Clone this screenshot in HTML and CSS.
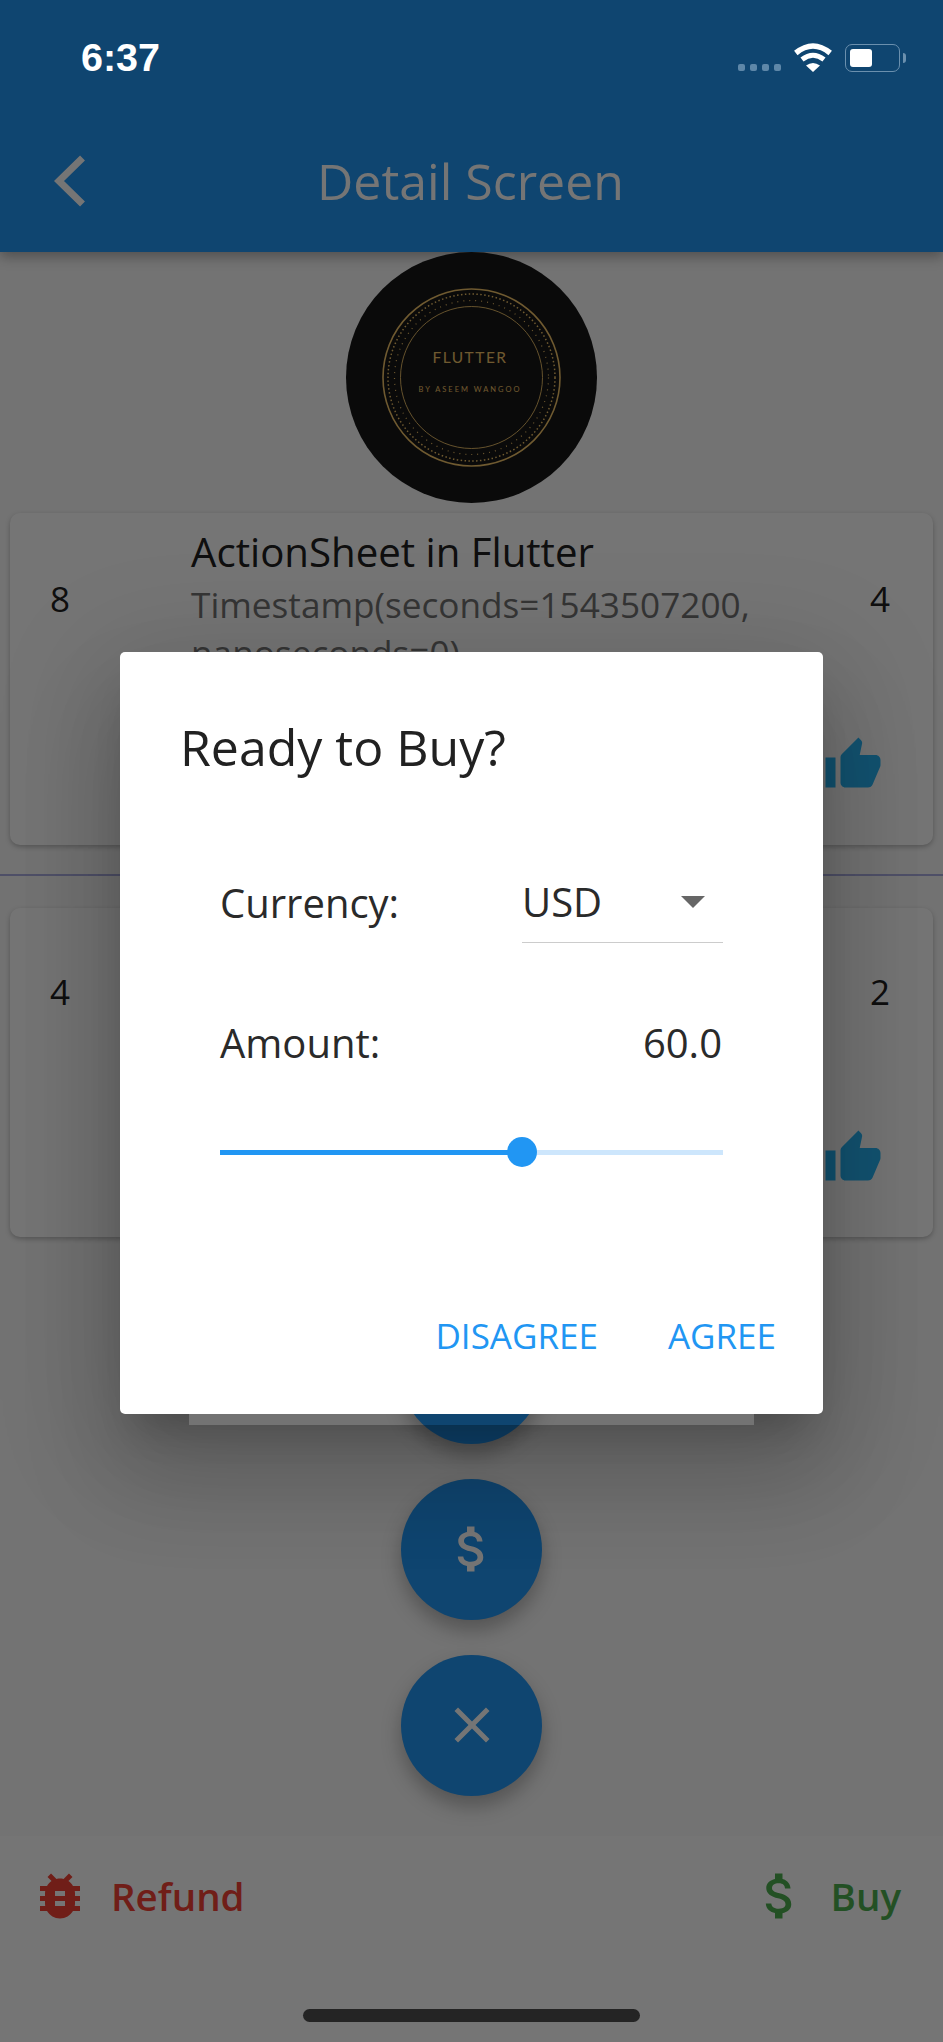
FILE: index.html
```html
<!doctype html>
<html lang="en">
<head>
    <meta charset="UTF-8">
    <meta name="viewport" content="width=device-width, initial-scale=1.0">
    <title>Detail Screen</title>
    <link rel="stylesheet" href="styles.css">
</head>
<body>
<div class="screen">

    <!-- App bar -->
    <header class="app-bar">
        <svg class="back-icon" viewBox="0 0 34 52"><polyline points="28.5,3 5,26 28.5,49"/></svg>
        <h1 class="app-title">Detail Screen</h1>
    </header>

    <main class="content">
        <!-- Avatar -->
        <svg class="logo" viewBox="0 0 251 251">
            <circle cx="125.5" cy="125.5" r="125.5" fill="#161616"/>
            <circle class="ring" cx="125.5" cy="125.5" r="88.5" stroke-width="1.6"/>
            <circle class="ring" cx="125.5" cy="125.5" r="83.5" stroke-width="1.5" stroke-dasharray="1.5 2.4"/>
            <circle class="ring" cx="125.5" cy="125.5" r="77" stroke-width="1.2" stroke-dasharray="1 5"/>
            <circle class="ring" cx="125.5" cy="125.5" r="71" stroke-width="0.9"/>
            <text class="logo-title" x="124" y="111" text-anchor="middle">FLUTTER</text>
            <text class="logo-sub" x="124" y="140" text-anchor="middle">BY ASEEM WANGOO</text>
        </svg>

        <!-- First item -->
        <article class="card card-first">
            <span class="count">8</span>
            <div class="card-text">
                <div class="card-title">ActionSheet in Flutter</div>
                <div class="card-sub">Timestamp(seconds=1543507200, nanoseconds=0)</div>
            </div>
            <div class="card-side">
                <span class="count">4</span>
                <svg class="thumb" viewBox="0 0 24 24"><path d="M1 21h4V9H1v12zm22-11c0-1.1-.9-2-2-2h-6.31l.95-4.57.03-.32c0-.41-.17-.79-.44-1.06L14.17 1 7.59 7.59C7.22 7.95 7 8.45 7 9v10c0 1.1.9 2 2 2h9c.83 0 1.54-.5 1.84-1.22l3.02-7.05c.09-.23.14-.47.14-.73v-2z"/></svg>
            </div>
        </article>

        <hr class="divider">

        <!-- Second item, its text is behind the dialog -->
        <article class="card card-second">
            <span class="count">4</span>
            <div class="card-text"></div>
            <div class="card-side">
                <span class="count">2</span>
                <svg class="thumb" viewBox="0 0 24 24"><path d="M1 21h4V9H1v12zm22-11c0-1.1-.9-2-2-2h-6.31l.95-4.57.03-.32c0-.41-.17-.79-.44-1.06L14.17 1 7.59 7.59C7.22 7.95 7 8.45 7 9v10c0 1.1.9 2 2 2h9c.83 0 1.54-.5 1.84-1.22l3.02-7.05c.09-.23.14-.47.14-.73v-2z"/></svg>
            </div>
        </article>

        <!-- Floating buttons -->
        <div class="fab-stack">
            <div class="fab"></div>
            <div class="fab">
                <svg class="fab-icon" viewBox="0 0 24 24"><path d="M11.8 10.9c-2.27-.59-3-1.2-3-2.15 0-1.09 1.01-1.85 2.7-1.85 1.78 0 2.44.85 2.5 2.1h2.21c-.07-1.72-1.12-3.3-3.21-3.81V3h-3v2.16c-1.94.42-3.5 1.68-3.5 3.61 0 2.31 1.91 3.46 4.7 4.13 2.5.6 3 1.48 3 2.41 0 .69-.49 1.79-2.7 1.79-2.06 0-2.87-.92-2.98-2.1h-2.2c.12 2.19 1.76 3.42 3.68 3.83V21h3v-2.15c1.95-.37 3.5-1.5 3.5-3.55 0-2.84-2.43-3.81-4.7-4.4z"/></svg>
            </div>
            <div class="fab">
                <svg class="fab-icon" viewBox="0 0 24 24"><path d="M19 6.41L17.59 5 12 10.59 6.41 5 5 6.41 10.59 12 5 17.59 6.41 19 12 13.41 17.59 19 19 17.59 13.41 12z"/></svg>
            </div>
        </div>
    </main>

    <!-- Footer buttons -->
    <footer class="footer">
        <div class="footer-btn refund">
            <svg class="footer-icon" viewBox="0 0 24 24"><path d="M20 8h-2.81c-.45-.78-1.07-1.45-1.82-1.96L17 4.41 15.59 3l-2.17 2.17C12.96 5.06 12.49 5 12 5c-.49 0-.96.06-1.41.17L8.41 3 7 4.41l1.62 1.63C7.88 6.55 7.26 7.22 6.81 8H4v2h2.09c-.05.33-.09.66-.09 1v1H4v2h2v1c0 .34.04.67.09 1H4v2h2.81c1.04 1.79 2.97 3 5.19 3s4.15-1.21 5.19-3H20v-2h-2.09c.05-.33.09-.66.09-1v-1h2v-2h-2v-1c0-.34-.04-.67-.09-1H20V8zm-6 8h-4v-2h4v2zm0-4h-4v-2h4v2z"/></svg>
            <span>Refund</span>
        </div>
        <div class="footer-btn buy">
            <svg class="footer-icon" viewBox="0 0 24 24"><path d="M11.8 10.9c-2.27-.59-3-1.2-3-2.15 0-1.09 1.01-1.85 2.7-1.85 1.78 0 2.44.85 2.5 2.1h2.21c-.07-1.72-1.12-3.3-3.21-3.81V3h-3v2.16c-1.94.42-3.5 1.68-3.5 3.61 0 2.31 1.91 3.46 4.7 4.13 2.5.6 3 1.48 3 2.41 0 .69-.49 1.79-2.7 1.79-2.06 0-2.87-.92-2.98-2.1h-2.2c.12 2.19 1.76 3.42 3.68 3.83V21h3v-2.15c1.95-.37 3.5-1.5 3.5-3.55 0-2.84-2.43-3.81-4.7-4.4z"/></svg>
            <span>Buy</span>
        </div>
    </footer>

    <!-- Modal barrier and dialog -->
    <div class="scrim">
        <section class="dialog">
            <h2 class="dialog-title">Ready to Buy?</h2>
            <div class="dialog-body">
                <div class="currency-row">
                    <span>Currency:</span>
                    <div class="dropdown">
                        <span>USD</span>
                        <i class="dropdown-arrow"></i>
                    </div>
                </div>
                <div class="amount-row">
                    <span>Amount:</span>
                    <span>60.0</span>
                </div>
                <div class="slider">
                    <div class="slider-active"></div>
                    <div class="slider-knob"></div>
                    <div class="slider-rest"></div>
                </div>
            </div>
            <div class="dialog-actions">
                <span class="action">DISAGREE</span>
                <span class="action">AGREE</span>
            </div>
        </section>
    </div>

    <!-- Status bar -->
    <div class="status-bar">
        <span class="time">6:37</span>
        <div class="status-icons">
            <div class="signal"><i></i><i></i><i></i><i></i></div>
            <svg class="wifi" viewBox="0 0 38 29">
                <path d="M1.8 10 Q19 -4 36.2 10" fill="none" stroke="#fff" stroke-width="5.5"/>
                <path d="M8 16.5 Q19 8 30 16.5" fill="none" stroke="#fff" stroke-width="5"/>
                <path d="M19 29 L12 22.5 Q19 17.5 26 22.5 Z" fill="#fff"/>
            </svg>
            <div class="battery"><div class="battery-level"></div></div>
            <div class="battery-nub"></div>
        </div>
    </div>

    <div class="home-indicator"></div>
</div>
</body>
</html>
```

FILE: styles.css
```css
* {
    box-sizing: border-box;
}
body {
    margin: 0;
    font-family: "Open Sans", "Noto Sans", sans-serif;
    color: #212121;
}
.screen {
    position: relative;
    width: 943px;
    height: 2042px;
    overflow: hidden;
    display: flex;
    flex-direction: column;
    background-color: #fafafa;
}

/* app bar */
.app-bar {
    position: relative;
    z-index: 1;
    height: 252px;
    flex-shrink: 0;
    background-color: #2196f3;
    box-shadow: 0 5px 12px rgba(0, 0, 0, 0.3);
    display: grid;
    grid-template-columns: 1fr auto 1fr;
    align-items: end;
    padding: 0 0 41px 54px;
}
.back-icon {
    width: 34px;
    height: 52px;
    margin-bottom: 4px;
}
.back-icon polyline {
    fill: none;
    stroke: #fff;
    stroke-width: 7;
}
.app-title {
    margin: 0 56px 0 0;
    font-size: 50px;
    font-weight: 400;
    line-height: 60px;
    color: #fff;
}

/* main column */
.content {
    flex: 1;
    display: flex;
    flex-direction: column;
}
.logo {
    position: relative;
    z-index: 2;
    display: block;
    width: 251px;
    height: 251px;
    margin: 0 auto;
}
.ring {
    fill: none;
    stroke: #f2c46a;
}
.logo-title {
    font-family: Lato, sans-serif;
    font-size: 15.5px;
    letter-spacing: 1.5px;
    fill: #f2c46a;
}
.logo-sub {
    font-family: Lato, sans-serif;
    font-size: 7.5px;
    letter-spacing: 2px;
    fill: #f2c46a;
}

/* cards */
.card {
    display: grid;
    grid-template-columns: 181px 1fr auto;
    margin: 0 10px;
    background-color: #fff;
    border-radius: 10px;
    box-shadow: 0 2px 5px rgba(0, 0, 0, 0.25);
}
.card-first {
    height: 332px;
    margin-top: 10px;
    padding-top: 11px;
}
.card-first .count {
    padding-top: 37px;
}
.card-second {
    height: 329px;
    padding-top: 46px;
}
.count {
    padding-left: 40px;
    font-size: 35px;
    line-height: 76px;
}
.card-side {
    display: flex;
    flex-direction: column;
    align-items: flex-end;
}
.card-side .count {
    padding-left: 0;
    padding-right: 43px;
}
.card-title {
    font-size: 40.2px;
    line-height: 56px;
}
.card-sub {
    width: 570px;
    font-size: 35.2px;
    line-height: 48px;
    color: #757575;
}
.thumb {
    width: 60px;
    height: 60px;
    margin: 98px 50px 0 0;
    fill: #29b6f6;
}
.divider {
    height: 2px;
    margin: 29px 0 32px;
    border: 0;
    background-color: #acaee2;
}

/* floating buttons */
.fab-stack {
    display: flex;
    flex-direction: column;
    align-items: center;
    gap: 35px;
    margin-top: 65.5px;
}
.fab {
    width: 141px;
    height: 141px;
    display: flex;
    align-items: center;
    justify-content: center;
    border-radius: 50%;
    background-color: #2196f3;
    box-shadow: 0 10px 20px rgba(0, 0, 0, 0.28);
}
.fab-icon {
    width: 60px;
    height: 60px;
    fill: #fff;
}

/* footer */
.footer {
    height: 206px;
    flex-shrink: 0;
    display: flex;
    justify-content: space-between;
    padding: 30px 42px 0 30px;
    background-color: #fff;
}
.footer-btn {
    display: flex;
    align-items: flex-start;
    gap: 21px;
    font-size: 38.5px;
    font-weight: 600;
    line-height: 60px;
}
.footer-icon {
    width: 60px;
    height: 60px;
    fill: currentColor;
}
.refund {
    color: #f44336;
}
.buy {
    color: #4caf50;
}

/* dialog */
.scrim {
    position: absolute;
    z-index: 3;
    inset: 0;
    display: flex;
    justify-content: center;
    align-items: flex-start;
    padding-top: 652px;
    background-color: rgba(0, 0, 0, 0.54);
}
.dialog {
    position: relative;
    width: 703px;
    height: 762px;
    padding: 61px 60px 0 60px;
    display: flex;
    flex-direction: column;
    border-radius: 5px;
    background-color: #fff;
}
/* shadow sits in its own layer: there is a gap in it just under the dialog */
.dialog::before {
    content: "";
    position: absolute;
    inset: 0;
    border-radius: 5px;
    box-shadow: 0 28px 38px -18px rgba(0, 0, 0, 0.2),
                0 60px 96px 8px rgba(0, 0, 0, 0.14),
                0 23px 116px 20px rgba(0, 0, 0, 0.12);
    clip-path: polygon(evenodd,
        -400px -400px, 1100px -400px, 1100px 1300px, -400px 1300px, -400px -400px,
        69px 762px, 634px 762px, 634px 773px, 69px 773px, 69px 762px);
}
.dialog-title {
    margin: 0;
    font-size: 50px;
    font-weight: 400;
    line-height: 68px;
}
.dialog-body {
    display: flex;
    flex-direction: column;
    margin: 0 40px 0 40px;
    font-size: 40px;
    color: #2a2a2a;
}
.currency-row {
    display: flex;
    align-items: flex-end;
    justify-content: space-between;
    margin-top: 93px;
}
.currency-row > span {
    padding-bottom: 13px;
}
.dropdown {
    position: relative;
    width: 201px;
    display: flex;
    align-items: center;
    justify-content: space-between;
    padding: 0 18px 13px 0;
    border-bottom: 1.5px solid #ccc;
}
.dropdown-arrow {
    border-left: 12px solid transparent;
    border-right: 12px solid transparent;
    border-top: 12px solid #666;
}
.amount-row {
    display: flex;
    justify-content: space-between;
    margin-top: 72px;
    padding-right: 1px;
}
.slider {
    display: flex;
    align-items: center;
    height: 30px;
    margin-top: 67px;
}
.slider-active {
    flex: 0 0 302px;
    height: 5px;
    background-color: #2196f3;
}
.slider-knob {
    position: relative;
    flex: 0 0 30px;
    height: 30px;
    margin-left: -15px;
    border-radius: 50%;
    background-color: #2196f3;
}
.slider-rest {
    flex: 1;
    height: 5px;
    margin-left: -15px;
    background-color: #cde6fc;
}
.dialog-actions {
    display: flex;
    justify-content: flex-end;
    gap: 70px;
    margin: auto -13px 54px 0;
}
.action {
    font-size: 35px;
    line-height: 48px;
    color: #2196f3;
}

/* status bar */
.status-bar {
    position: absolute;
    z-index: 4;
    top: 0;
    left: 0;
    right: 0;
    display: flex;
    justify-content: space-between;
    padding: 33px 37px 0 81px;
    color: #fff;
}
.time {
    font-family: "Liberation Sans", Arial, sans-serif;
    font-size: 39.5px;
    font-weight: 700;
    line-height: 48px;
}
.status-icons {
    display: flex;
    align-items: flex-start;
    padding-top: 10px;
}
.signal {
    display: flex;
    gap: 5px;
    margin: 21px 13px 0 0;
}
.signal i {
    width: 7px;
    height: 7px;
    border-radius: 2px;
    background-color: #5e87a8;
}
.wifi {
    width: 38px;
    height: 29px;
    margin-right: 13px;
}
.battery {
    width: 55px;
    height: 28px;
    margin-top: 1px;
    padding: 4px;
    border: 1.5px solid #6b90ae;
    border-radius: 7px;
}
.battery-level {
    width: 22px;
    height: 100%;
    border-radius: 3px;
    background-color: #fff;
}
.battery-nub {
    width: 3px;
    height: 10px;
    margin: 10px 0 0 3px;
    border-radius: 0 3px 3px 0;
    background-color: #6b90ae;
}
.home-indicator {
    position: absolute;
    z-index: 4;
    left: 303px;
    top: 2009px;
    width: 337px;
    height: 13px;
    border-radius: 7px;
    background-color: #242424;
}
```
